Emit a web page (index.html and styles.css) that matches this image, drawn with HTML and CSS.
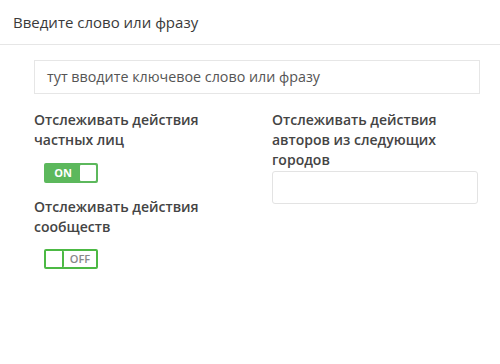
FILE: index.html
```html
<!DOCTYPE html>
<html lang="ru">
<head>
<meta charset="utf-8">
<link rel="stylesheet" href="styles.css">
</head>
<body>
<div class="header">Введите слово или фразу</div>
<div class="content">
  <div class="phrase">тут вводите ключевое слово или фразу</div>
  <div class="cols">
    <div class="col-left">
      <div class="label">Отслеживать действия частных лиц</div>
      <div class="toggle on"><span class="tlabel">ON</span><span class="knob"></span></div>
      <div class="label second">Отслеживать действия сообществ</div>
      <div class="toggle off"><span class="knob"></span><span class="tlabel">OFF</span></div>
    </div>
    <div class="col-right">
      <div class="label">Отслеживать действия авторов из следующих городов</div>
      <div class="city"></div>
    </div>
  </div>
</div>
</body>
</html>
```
FILE: styles.css
```css
* { box-sizing: border-box; }
body {
  margin: 0;
  background: #fff;
  font-family: "Open Sans", "Noto Sans", sans-serif;
  color: #444;
}
.header {
  height: 45px;
  padding: 0 13px;
  line-height: 44px;
  font-size: 15px;
  color: #3a3a3a;
  border-bottom: 1px solid #e6e6e6;
}
.content {
  padding: 15px 20px 0 34px;
}
.phrase {
  height: 34px;
  border: 1px solid #e6e6e6;
  padding: 0 12px;
  line-height: 32px;
  font-size: 14.3px;
  color: #555;
}
.cols {
  display: flex;
  margin-top: 16px;
}
.col-left {
  width: 238px;
  flex: none;
}
.col-right {
  width: 206px;
}
.label {
  font-size: 14px;
  font-weight: 600;
  line-height: 20px;
  color: #444;
  width: 200px;
}
.label.second { margin-top: 14px; }
.toggle {
  margin: 13px 0 0 10px;
  width: 54px;
  height: 20px;
  border: 2px solid #4cb944;
  border-radius: 2px;
  display: flex;
  font-size: 11px;
  font-weight: 700;
}
.toggle.on { background: #5cb85c; border-color: #5cb85c; }
.toggle .tlabel {
  flex: 1;
  text-align: center;
  line-height: 16px;
}
.toggle.on .tlabel { color: #fff; }
.toggle.off .tlabel { color: #888; font-weight: 600; }
.toggle .knob {
  width: 16px;
  background: #fff;
  border-radius: 1px;
}
.toggle.off { margin-top: 12px; }
.toggle.off .knob { border-right: 2px solid #4cb944; width: 18px; }
.city {
  margin-top: 1px;
  height: 33px;
  border: 1px solid #e3e3e3;
  border-radius: 3px;
}
```
